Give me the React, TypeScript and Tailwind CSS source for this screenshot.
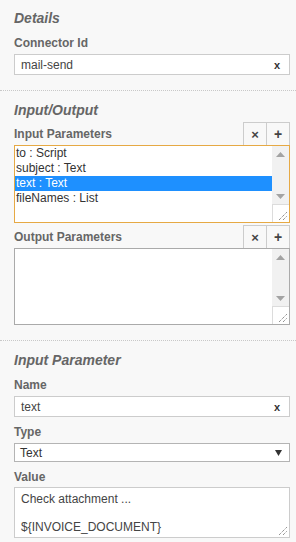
import React from "react";

const font = { fontFamily: '"Liberation Sans", Arial, sans-serif' };

function Up() {
  return (
    <svg width="9" height="5" viewBox="0 0 9 5">
      <polygon points="0,5 9,5 4.5,0" fill="#a3a3a3" />
    </svg>
  );
}
function Down() {
  return (
    <svg width="9" height="5" viewBox="0 0 9 5">
      <polygon points="0,0 9,0 4.5,5" fill="#a3a3a3" />
    </svg>
  );
}
function Grip() {
  return (
    <svg width="8" height="8" viewBox="0 0 8 8" className="absolute bottom-[2px] right-[2px]">
      <line x1="0" y1="8" x2="8" y2="0" stroke="#666" strokeWidth="1" strokeDasharray="1 1" />
      <line x1="4" y1="8" x2="8" y2="4" stroke="#666" strokeWidth="1" strokeDasharray="1 1" />
    </svg>
  );
}

function ListBox({
  items,
  selected,
  boxClass,
}: {
  items: string[];
  selected: number;
  boxClass: string;
}) {
  return (
    <div className={boxClass}>
      <div className="flex-1 text-[12px] leading-[15px] text-[#333]">
        {items.map((it, i) => (
          <div
            key={i}
            className={
              i === selected
                ? "h-[15px] whitespace-pre bg-[#1e90ff] pl-[1px] text-white"
                : "h-[15px] whitespace-pre pl-[1px]"
            }
          >
            {it}
          </div>
        ))}
      </div>
      <div className="flex w-[17px] flex-col bg-[#f1f1f1]">
        <div className="flex h-[17px] items-center justify-center">
          <Up />
        </div>
        <div className="flex-1" />
        <div className="flex h-[15px] items-center justify-center">
          <Down />
        </div>
        <div className="relative h-[18px] border-l border-t border-[#dcdcdc] bg-white">
          <Grip />
        </div>
      </div>
    </div>
  );
}

function ButtonRow({ label }: { label: string }) {
  return (
    <div className="flex h-[23px] items-center justify-between">
      <span className="text-[12px] font-bold leading-[16px] text-[#666]">{label}</span>
      <div className="flex h-[23px] border border-b-0 border-[#cccccc]">
        <div className="flex w-[22px] items-center justify-center text-[13px] font-bold leading-none text-[#444]">
          ×
        </div>
        <div className="flex w-[23px] items-center justify-center border-l border-[#cccccc] text-[14px] font-bold leading-none text-[#444]">
          +
        </div>
      </div>
    </div>
  );
}

function TextInput({ value }: { value: string }) {
  return (
    <div className="relative mt-[3px] flex h-[21px] items-center border border-[#cccccc] bg-white pl-[6px] text-[12px] text-[#444]">
      {value}
      <span className="absolute right-[9px] top-[3px] text-[11px] font-bold leading-[14px] text-[#333]">
        x
      </span>
    </div>
  );
}

function Label({ children, className }: { children: React.ReactNode; className: string }) {
  return (
    <div className={"h-[16px] text-[12px] font-bold leading-[16px] text-[#666] " + className}>
      {children}
    </div>
  );
}

function Heading({ children }: { children: React.ReactNode }) {
  return (
    <div className="h-[20px] text-[14px] font-bold italic leading-[20px] text-[#666]">{children}</div>
  );
}

export default function App() {
  return (
    <div style={font} className="h-[542px] w-[296px] overflow-hidden bg-[#f8f8f8]">
      <div className="border-b border-dotted border-[#c8c8c8] pb-[15px] pl-[14px] pr-[6px] pt-[8px]">
        <Heading>Details</Heading>
        <Label className="mt-[7px]">Connector Id</Label>
        <TextInput value="mail-send" />
      </div>

      <div className="border-b border-dotted border-[#c8c8c8] pb-[15px] pl-[14px] pr-[6px] pt-[9px]">
        <Heading>Input/Output</Heading>
        <div className="mt-[2px]">
          <ButtonRow label="Input Parameters" />
        </div>
        <ListBox
          items={["to : Script", "subject : Text", "text : Text", "fileNames : List"]}
          selected={2}
          boxClass="flex h-[78px] border border-[#e6a944] bg-white"
        />
        <div className="mt-[2px]">
          <ButtonRow label="Output Parameters" />
        </div>
        <ListBox items={[]} selected={-1} boxClass="flex h-[77px] border border-[#aaaaaa] bg-white" />
      </div>

      <div className="pl-[14px] pr-[6px] pt-[9px]">
        <Heading>Input Parameter</Heading>
        <Label className="mt-[7px]">Name</Label>
        <TextInput value="text" />
        <Label className="mt-[7px]">Type</Label>
        <div className="relative mt-[3px] flex h-[19px] items-center border border-[#b4b4b4] bg-white pl-[5px] text-[12px] text-[#333]">
          Text
          <svg width="7" height="6" viewBox="0 0 7 6" className="absolute right-[7px] top-[6px]">
            <polygon points="0,0 7,0 3.5,6" fill="#333" />
          </svg>
        </div>
        <Label className="mt-[7px]">Value</Label>
        <div className="relative mt-[2px] h-[51px] border border-[#cccccc] bg-white pl-[6px] pt-[4px] text-[12px] leading-[14px] text-[#444]">
          <div>Check attachment ...</div>
          <div>&nbsp;</div>
          <div>{"${INVOICE_DOCUMENT}"}</div>
          <Grip />
        </div>
      </div>
    </div>
  );
}
